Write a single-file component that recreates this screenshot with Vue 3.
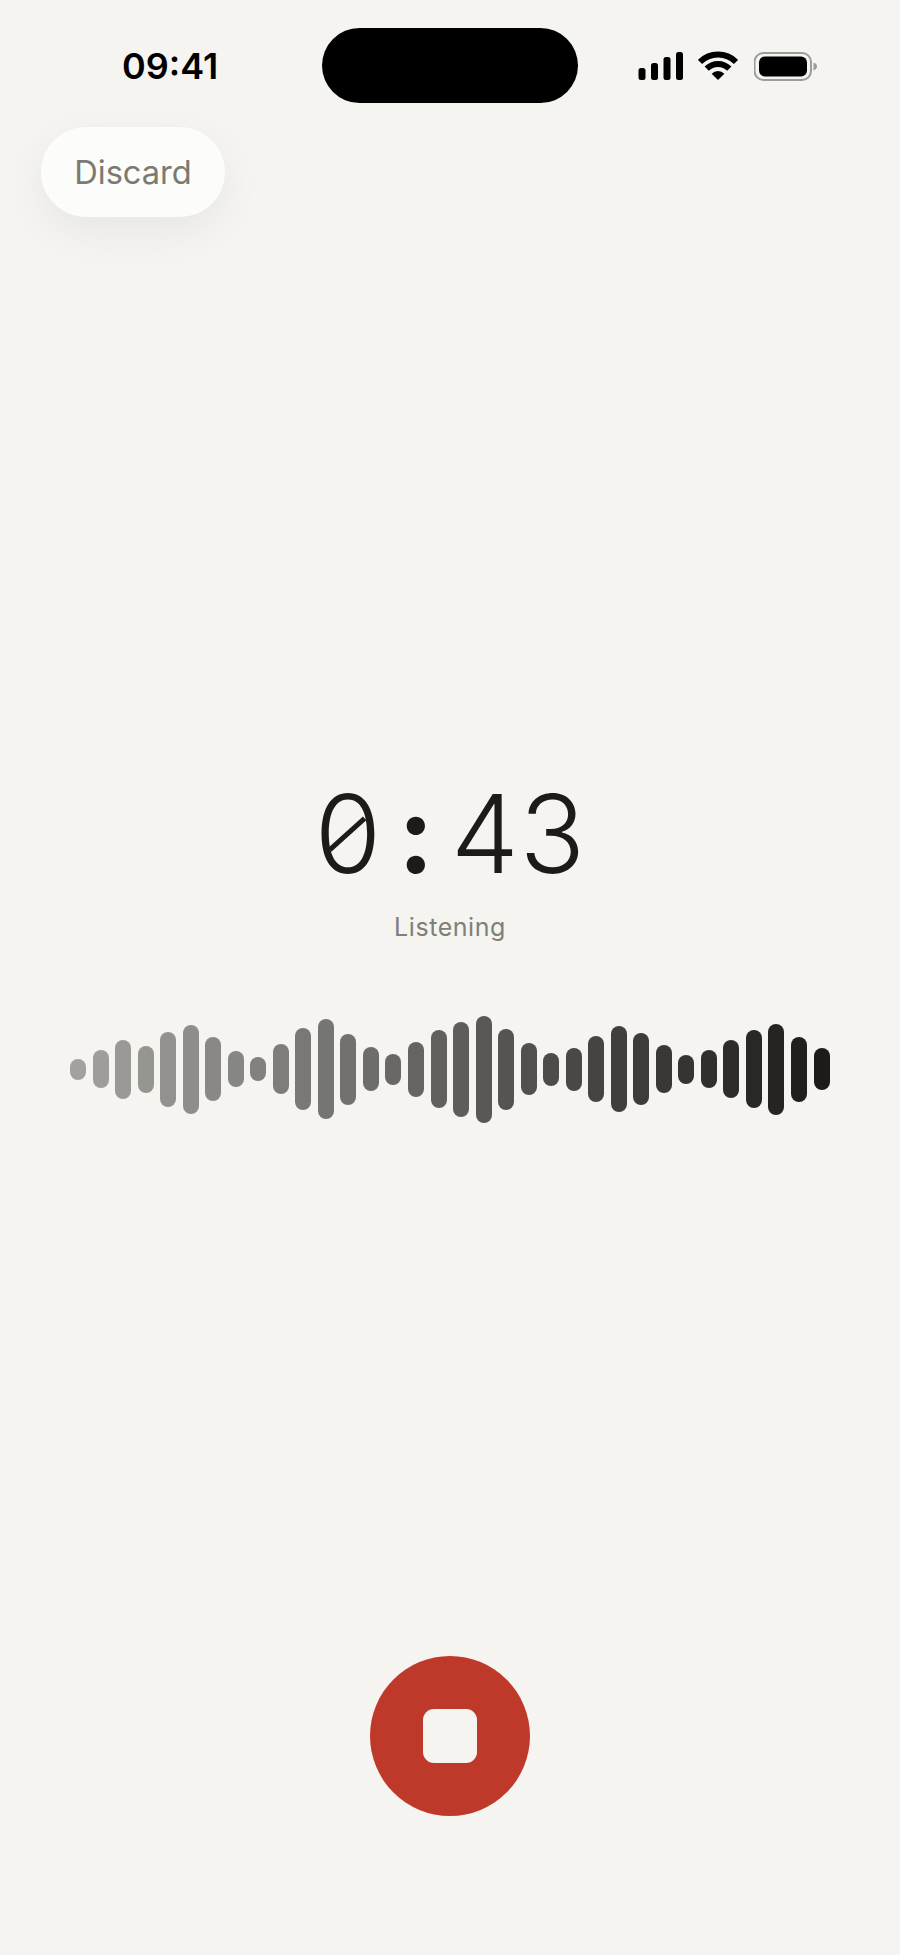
<template>
	<div class="screen">
		<header class="status">
			<span class="clock">09:41</span>
			<div class="island"></div>
			<div class="indicators">
				<svg class="signal" width="46" height="29" viewBox="0 0 46 29" fill="#000">
					<rect x="0.5" y="17" width="7" height="12" rx="2.5" />
					<rect x="13" y="12" width="7" height="17" rx="2.5" />
					<rect x="25.5" y="6" width="7" height="23" rx="2.5" />
					<rect x="38" y="1" width="7" height="28" rx="2.5" />
				</svg>
				<svg class="wifi" width="40" height="29" viewBox="0 0 40 29">
					<path d="M1.97 10.97A25.5 25.5 0 0 1 38.03 10.97" fill="none" stroke="#000" stroke-width="6" />
					<path d="M8.69 17.69A16 16 0 0 1 31.31 17.69" fill="none" stroke="#000" stroke-width="6" />
					<path d="M20 29L13.64 22.64A9 9 0 0 1 26.36 22.64Z" fill="#000" />
				</svg>
				<svg class="battery" width="64" height="30" viewBox="0 0 64 30">
					<rect x="0.5" y="2" width="56.5" height="27" rx="9" fill="none" stroke="#9c9c98" stroke-width="2" />
					<rect x="5" y="5.5" width="48" height="20" rx="6" fill="#000" />
					<path d="M59.5 11.5C61.8 12.2 63 13.8 63 15.5S61.8 18.8 59.5 19.5Z" fill="#9c9c98" />
				</svg>
			</div>
		</header>

		<button class="discard" type="button">Discard</button>

		<main class="recorder">
			<div class="timer">
				<span v-for="(c, i) of timerChars" :key="i" :class="charClass(c)">{{c}}</span>
			</div>
			<p class="state">Listening</p>
			<div class="wave">
				<i v-for="(h, i) of bars" :key="i" :style="barStyle(h, i)"></i>
			</div>
		</main>

		<footer class="controls">
			<button class="stop" type="button" aria-label="Stop">
				<span></span>
			</button>
		</footer>
	</div>
</template>

<style>
	body
	{
		background: #f5f4f0;
	}
</style>

<style scoped>
	.screen
	{
		display: flex;
		flex-direction: column;
		width: 900px;
		height: 1955px;
		background: #f5f4f0;
		font-family: Inter, "Liberation Sans", sans-serif;
		overflow: hidden;
	}

	.status
	{
		display: grid;
		grid-template-columns: 322px 256px 1fr;
		align-items: center;
		margin-top: 28px;
		height: 75px;
	}

	.clock
	{
		padding-left: 122px;
		font-size: 36px;
		font-weight: 600;
		color: #000;
	}

	.island
	{
		height: 75px;
		border-radius: 38px;
		background: #000;
	}

	.indicators
	{
		display: flex;
		align-items: flex-start;
		padding-left: 60px;
		height: 29px;
	}

	.wifi
	{
		margin-left: 14px;
	}

	.battery
	{
		margin-left: 16px;
	}

	.discard
	{
		align-self: flex-start;
		margin: 24px 0 0 41px;
		width: 184px;
		height: 90px;
		padding: 0;
		border: 0;
		border-radius: 45px;
		background: #fcfcfa;
		box-shadow: 0 14px 44px rgba(0, 0, 0, .06);
		font: 400 32.6px Inter, "Liberation Sans", sans-serif;
		color: #7a7a73;
	}

	.recorder
	{
		display: flex;
		flex-direction: column;
		align-items: center;
		padding-top: 551px;
	}

	.timer
	{
		display: flex;
		justify-content: center;
		height: 132px;
		line-height: 132px;
		font-size: 108px;
		font-weight: 350;
		color: #1c1b18;
		font-feature-settings: "tnum";
	}

	.timer span
	{
		position: relative;
		width: 68.5px;
		text-align: center;
	}

	.timer .colon
	{
		font-weight: 700;
	}

	/* the zero's slash sits inside the oval, shallower than the font's own */
	.timer .zero::after
	{
		content: "";
		position: absolute;
		left: 50%;
		top: 50%;
		width: 47px;
		height: 4.5px;
		background: #1c1b18;
		transform: translate(-50%, -50%) rotate(-42deg);
	}

	.state
	{
		margin: 11px 0 0;
		font-size: 25px;
		line-height: 32px;
		letter-spacing: .55px;
		color: #7f7f79;
	}

	.wave
	{
		display: flex;
		justify-content: space-between;
		align-items: center;
		align-self: stretch;
		height: 110px;
		margin-top: 71px;
		padding: 0 70px;
	}

	.wave i
	{
		display: block;
		width: 16px;
		border-radius: 8px;
		background: #1c1b18;
	}

	.controls
	{
		display: flex;
		justify-content: center;
		margin-top: auto;
		padding-bottom: 139px;
	}

	.stop
	{
		display: flex;
		align-items: center;
		justify-content: center;
		width: 160px;
		height: 160px;
		padding: 0;
		border: 0;
		border-radius: 50%;
		background: #bf392a;
	}

	.stop span
	{
		width: 54px;
		height: 54px;
		border-radius: 11px;
		background: #f5f4f0;
	}
</style>

<script setup>
	const timerChars = ["0", ":", "4", "3"];

	const bars = [
		21, 38, 59, 47, 75, 89, 64, 36, 24, 50, 82, 100, 71, 44, 31, 55, 78,
		95, 107, 81, 52, 33, 43, 66, 86, 72, 48, 29, 38, 58, 78, 91, 65, 42,
	];

	const charClass = c => {
		switch (c) {
		case ":":
			return "colon";

		case "0":
			return "zero";
		}

		return "digit";
	};

	// older samples fade out towards the left
	const barStyle = (h, i) => ({
		height: `${h}px`,
		opacity: 0.38 + 0.62 * i / (bars.length - 1),
	});
</script>
